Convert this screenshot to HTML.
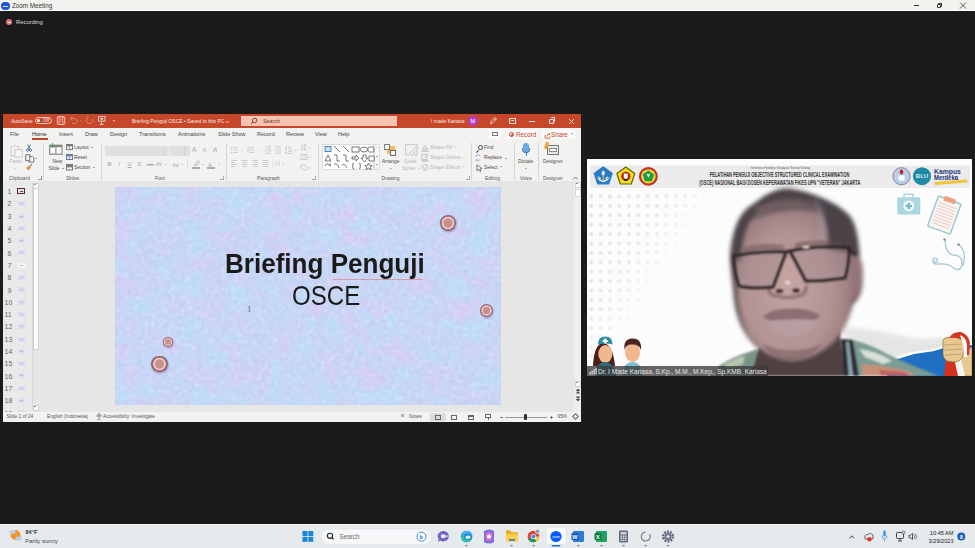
<!DOCTYPE html>
<html><head><meta charset="utf-8">
<style>
*{margin:0;padding:0;box-sizing:border-box}
html,body{width:975px;height:548px;overflow:hidden;background:#1b1b1b;font-family:"Liberation Sans",sans-serif;position:relative}
.a{position:absolute}
.t{position:absolute;white-space:nowrap;line-height:1}
#ztitle{left:0;top:0;width:975px;height:11px;background:#f4f2ee;border-bottom:0.6px solid #fff}
.ppt{position:absolute}
#ptitle{left:3px;top:114px;width:578px;height:14px;background:#c6472a}
#ribbon{left:3px;top:128px;width:578px;height:53px;background:#f3f2f1}
#slidepanel{left:3px;top:181px;width:37px;height:231px;background:#e9e9e9}
#editarea{left:40px;top:181px;width:541px;height:231px;background:#e6e6e6}
#status{left:3px;top:412px;width:578px;height:10px;background:#f3f2f1}
#slide{left:115px;top:187px;width:386px;height:218px;background:#c9d2f2;overflow:hidden}
#video{left:587px;top:159px;width:385px;height:217px;background:#fdfdfd;overflow:hidden}
#taskbar{left:0;top:524px;width:975px;height:24px;background:#e6eaed;border-top:0.6px solid #f2f4f6}
.tab{position:absolute;top:131.5px;font-size:5.5px;color:#444;line-height:1}
.wt{color:#fbe8e2;font-size:5px}
.gl{margin-top:1.2px;position:absolute;font-size:6px;color:#555;line-height:1;white-space:nowrap}
.gr{margin-top:1.4px;position:absolute;font-size:6px;color:#4a4a4a;line-height:1;white-space:nowrap}
.dis{color:#aaa}
.circ{border-radius:50%;background:radial-gradient(circle closest-side,#c28c88 0,#c89490 55%,#f4d4cc 63%,#f0ccc4 74%,#a87080 82%,#8a5c70 100%);box-shadow:0.5px 1px 2px rgba(80,50,90,0.45)}
.dd{display:inline-block;width:0;height:0;border-left:1.4px solid transparent;border-right:1.4px solid transparent;border-top:1.6px solid currentColor;vertical-align:0.3em;margin-left:0.2em}
.du{display:inline-block;width:0;height:0;border-left:1.4px solid transparent;border-right:1.4px solid transparent;border-bottom:1.6px solid currentColor;vertical-align:0.3em;margin-left:0.2em}
.sep{position:absolute;width:1px;background:#d6d5d4}
</style></head><body>
<!-- zoom title bar -->
<div id="ztitle" class="a"></div>
<div class="a" style="left:1px;top:1.5px;width:8.5px;height:8.5px;border-radius:50%;background:#1b55d8"></div>
<div class="a" style="left:3px;top:5.5px;width:4.5px;height:0.8px;background:#dfe8ff"></div>
<div class="t" style="left:12px;top:3px;font-size:6.3px;color:#333">Zoom Meeting</div>
<div class="a" style="left:914px;top:5px;width:5px;height:0.9px;background:#333"></div>
<div class="a" style="left:936.5px;top:3.5px;width:4.5px;height:4.5px;border:0.9px solid #333;border-radius:1px"></div><div class="a" style="left:937.8px;top:2.5px;width:4.2px;height:4.2px;border-top:0.9px solid #333;border-right:0.9px solid #333;border-radius:1px"></div>
<svg class="a" style="left:959px;top:2px" width="8" height="7" viewBox="0 0 8 7"><path d="M1 0.5 L7 6.5 M7 0.5 L1 6.5" stroke="#333" stroke-width="0.8"/></svg>
<!-- recording -->
<div class="a" style="left:6px;top:19px;width:6px;height:6px;border-radius:50%;background:#e07575"></div>
<div class="a" style="left:7.5px;top:21.5px;width:3px;height:1px;background:#fff"></div>
<div class="t" style="left:16px;top:19.5px;font-size:5.9px;color:#ddd">Recording</div>

<!-- PowerPoint -->
<div id="ptitle" class="ppt"></div>
<div class="t wt" style="left:11px;top:118.5px">AutoSave</div>
<div class="a" style="left:35px;top:117px;width:17px;height:7px;border:1px solid #f2c9bd;border-radius:4px"></div>
<div class="a" style="left:37px;top:119px;width:3px;height:3px;border-radius:50%;background:#fff"></div>
<div class="t" style="left:43px;top:119px;font-size:4.5px;color:#fbe8e2">Off</div>






<svg class="a" style="left:55px;top:115px" width="65" height="12" viewBox="55 115 65 12">
<rect x="57.3" y="116.8" width="7.4" height="7.6" rx="0.8" fill="none" stroke="#f4d2c6" stroke-width="0.9"/>
<rect x="59" y="116.8" width="4" height="2.3" fill="none" stroke="#f4d2c6" stroke-width="0.7"/>
<rect x="59" y="121" width="4" height="3.4" fill="none" stroke="#f4d2c6" stroke-width="0.7"/>
<path d="M71 118.5 H74.5 A2.5 2.5 0 0 1 74.5 123.5 H72" fill="none" stroke="#d98a74" stroke-width="0.9"/>
<path d="M72.5 116.8 L70.6 118.5 L72.5 120.2" fill="none" stroke="#d98a74" stroke-width="0.9"/>
<circle cx="80.5" cy="120.5" r="0.5" fill="#d98a74"/>
<path d="M88 117.3 A3.3 3.3 0 1 0 92.6 119" fill="none" stroke="#d98a74" stroke-width="0.9"/>
<path d="M87 116.2 L88.3 117.4 L87 118.8" fill="none" stroke="#d98a74" stroke-width="0.8"/>
<rect x="98.5" y="116.6" width="6.5" height="4.5" fill="none" stroke="#f4d2c6" stroke-width="0.9"/>
<rect x="100.5" y="117.8" width="2.5" height="2" fill="#f4d2c6"/>
<path d="M101.7 121.1 V124.5 M99.8 124.5 H103.6" stroke="#f4d2c6" stroke-width="0.9"/>
<path d="M112.6 120.3 H115.4 L114 121.8z" fill="#f4d2c6"/>
</svg>
<div class="t wt" style="left:132px;top:118.6px">Briefing Penguji OSCE &#x2022; Saved to this PC</div><svg class="a" style="left:225px;top:119.5px" width="5" height="4" viewBox="0 0 5 4"><path d="M0.8 1 L2.5 2.8 L4.2 1" fill="none" stroke="#fbe8e2" stroke-width="0.8"/></svg>
<div class="a" style="left:241px;top:116px;width:156px;height:10px;background:#f8c4b1"></div>
<svg class="a" style="left:250px;top:116.5px" width="8" height="8" viewBox="0 0 8 8"><circle cx="4.6" cy="3.4" r="2.2" fill="none" stroke="#5a2a1a" stroke-width="0.8"/><path d="M3 5 L1 7" stroke="#5a2a1a" stroke-width="0.9"/></svg>
<div class="t" style="left:263px;top:118.8px;font-size:5.4px;color:#6a3a2a">Search</div>
<div class="t wt" style="left:431px;top:118.6px">I made Kariasa</div>
<div class="a" style="left:468px;top:116px;width:10px;height:10px;border-radius:50%;background:#b23fc5"></div>
<div class="t" style="left:470.5px;top:118.5px;font-size:5.5px;color:#fff">M</div>
<svg class="a" style="left:489px;top:116px" width="9" height="9" viewBox="0 0 9 9" fill="none" stroke="#fbe8e2" stroke-width="0.8"><path d="M1.5 7.5 L2 5.5 L6 1.5 L7.5 3 L3.5 7 Z M5 2.5 L6.5 4"/></svg>
<div class="a" style="left:508.5px;top:117.5px;width:7px;height:6px;border:0.8px solid #f6d8ce"></div><div class="a" style="left:510.5px;top:119.5px;width:3px;height:1px;background:#f6d8ce"></div>
<div class="a" style="left:529px;top:120.5px;width:6px;height:1px;background:#fbe8e2"></div>
<div class="a" style="left:549px;top:118.5px;width:5px;height:5px;border:0.9px solid #fbe8e2;border-radius:1px"></div><div class="a" style="left:550.5px;top:117.3px;width:4.5px;height:4.5px;border-top:0.9px solid #fbe8e2;border-right:0.9px solid #fbe8e2;border-radius:1px"></div>
<svg class="a" style="left:567.5px;top:117.5px" width="7" height="7" viewBox="0 0 7 7"><path d="M1 1 L6 6 M6 1 L1 6" stroke="#fbe8e2" stroke-width="0.9"/></svg>

<div id="ribbon" class="ppt"></div>
<div class="tab" style="left:10px">File</div>
<div class="tab" style="left:32px;color:#222">Home</div>
<div class="a" style="left:32px;top:138px;width:16px;height:1.5px;background:#b7472a"></div>
<div class="tab" style="left:59px">Insert</div>
<div class="tab" style="left:85px">Draw</div>
<div class="tab" style="left:110px">Design</div>
<div class="tab" style="left:139px">Transitions</div>
<div class="tab" style="left:178px">Animations</div>
<div class="tab" style="left:218px">Slide Show</div>
<div class="tab" style="left:257px">Record</div>
<div class="tab" style="left:286px">Review</div>
<div class="tab" style="left:315px">View</div>
<div class="tab" style="left:338px">Help</div>
<!-- record/share -->
<div class="a" style="left:489px;top:130px;width:12px;height:9px;background:#fbfbfb"></div>
<div class="a" style="left:492px;top:132px;width:6px;height:4px;border:1px solid #777"></div>
<div class="a" style="left:506px;top:130px;width:31px;height:9px;background:#fbfbfb"></div>
<div class="a" style="left:509px;top:132px;width:5px;height:5px;border-radius:50%;border:1px solid #c43e1c;background:#fff"></div>
<div class="a" style="left:510.5px;top:133.5px;width:2px;height:2px;border-radius:50%;background:#c43e1c"></div>
<div class="t" style="left:516px;top:131.5px;font-size:6.3px;color:#c43e1c">Record</div>
<div class="a" style="left:542px;top:130px;width:33px;height:9px;background:#fbfbfb"></div>
<svg class="a" style="left:544px;top:131.5px" width="7" height="7" viewBox="0 0 7 7" fill="none" stroke="#c43e1c" stroke-width="0.7"><path d="M1 3 V6.2 H5.8 V4.5 M3 4.5 Q3 2 6 2 M4.8 0.8 L6 2 L4.8 3.2"/></svg>
<div class="t" style="left:551px;top:131.5px;font-size:6.3px;color:#c43e1c">Share</div>
<div class="t" style="left:570px;top:131.5px;font-size:5px;color:#555"><i class="dd"></i></div>

<!-- ribbon groups -->
<div class="sep" style="left:43px;top:143px;height:37px"></div>
<div class="sep" style="left:101px;top:143px;height:37px"></div>
<div class="sep" style="left:226px;top:143px;height:37px"></div>
<div class="sep" style="left:318px;top:143px;height:37px"></div>
<div class="sep" style="left:471px;top:143px;height:37px"></div>
<div class="sep" style="left:514px;top:143px;height:37px"></div>
<div class="sep" style="left:538px;top:143px;height:37px"></div>
<div class="gl" style="left:9px;top:175.5px;font-size:4.9px">Clipboard</div>
<div class="gl" style="left:66px;top:175.5px;font-size:4.9px">Slides</div>
<div class="gl" style="left:155px;top:175.5px;font-size:4.9px">Font</div>
<div class="gl" style="left:257px;top:175.5px;font-size:4.9px">Paragraph</div>
<div class="gl" style="left:381.5px;top:175.5px;font-size:4.9px">Drawing</div>
<div class="gl" style="left:485px;top:175.5px;font-size:4.9px">Editing</div>
<div class="gl" style="left:520px;top:175.5px;font-size:4.9px">Voice</div>
<div class="gl" style="left:543px;top:175.5px;font-size:4.9px">Designer</div>
<div class="a" style="left:38px;top:176px;width:3.5px;height:3.5px;border-right:0.8px solid #999;border-bottom:0.8px solid #999"></div>
<div class="a" style="left:220px;top:176px;width:3.5px;height:3.5px;border-right:0.8px solid #aaa;border-bottom:0.8px solid #aaa"></div>
<div class="a" style="left:312px;top:176px;width:3.5px;height:3.5px;border-right:0.8px solid #aaa;border-bottom:0.8px solid #aaa"></div>
<div class="a" style="left:466px;top:176px;width:3.5px;height:3.5px;border-right:0.8px solid #aaa;border-bottom:0.8px solid #aaa"></div>
<svg class="a" style="left:572px;top:176px" width="7" height="4" viewBox="0 0 7 4"><path d="M1 3.5 L3.5 1 L6 3.5" fill="none" stroke="#555" stroke-width="0.8"/></svg>
<!-- clipboard -->
<svg class="a" style="left:9.5px;top:143.5px" width="14" height="14" viewBox="0 0 14 14" fill="#f5f4f3" stroke="#c2c2c2" stroke-width="0.8"><path d="M1 2.5 H3.5 L5 1 L6.5 2.5 H9 V5 M1 2.5 V12 H4.5"/><rect x="4.8" y="5.5" width="7.5" height="7.5"/></svg>
<div class="gr dis" style="left:9.5px;top:159px;font-size:4.9px;color:#b5b5b5">Paste</div>
<div class="gr" style="left:13px;top:166px;font-size:4px;color:#bbb"><i class="dd"></i></div>
<svg class="a" style="left:25px;top:144px" width="8" height="8" viewBox="0 0 8 8" fill="none" stroke="#2a5a90" stroke-width="0.8"><path d="M2.5 0.5 L5 5 M5.5 0.5 L3 5"/><circle cx="2.5" cy="6.2" r="1.1"/><circle cx="5.5" cy="6.2" r="1.1"/></svg>
<svg class="a" style="left:24.5px;top:153.5px" width="10" height="9" viewBox="0 0 10 9" fill="none" stroke="#5a5a5a" stroke-width="0.8"><rect x="0.8" y="0.8" width="4" height="6"/><path d="M4.8 2.5 H7.5 L8.8 3.8 V8.2 H4 V6.8" /></svg>
<div class="gr" style="left:34px;top:156px;font-size:4px;color:#666"><i class="dd"></i></div>
<svg class="a" style="left:25px;top:163px" width="8" height="8" viewBox="0 0 8 8"><path d="M1 5 L4 2.5 L6 4.5 L3.5 7.5z" fill="#e8903a"/><path d="M5 3.5 L7 1" stroke="#444" stroke-width="0.9"/></svg>
<!-- slides -->
<svg class="a" style="left:49px;top:143px" width="14" height="12" viewBox="0 0 14 12"><rect x="0.7" y="2.2" width="12.3" height="9" fill="#fafafa" stroke="#808080" stroke-width="1.1"/><rect x="0.7" y="2.2" width="12.3" height="2" fill="#808080"/><rect x="6.4" y="4" width="1" height="7" fill="#808080"/><path d="M3.5 0 V5 M1 2.5 H6" stroke="#3aa050" stroke-width="0.9"/></svg>
<div class="gr" style="left:52.5px;top:159px;font-size:4.9px">New</div>
<div class="gr" style="left:48.5px;top:166px;font-size:4.9px">Slide <i class="dd"></i></div>
<svg class="a" style="left:66px;top:144px" width="7" height="6" viewBox="0 0 7 6"><rect width="7" height="6" fill="#7a7a7a"/><rect x="1" y="2.3" width="2.2" height="2.7" fill="#f0f0f0"/><rect x="3.8" y="2.3" width="2.2" height="2.7" fill="#f0f0f0"/></svg>
<div class="gr" style="left:74px;top:145px;font-size:4.9px">Layout <i class="dd"></i></div>
<svg class="a" style="left:66px;top:154px" width="7" height="6" viewBox="0 0 7 6"><rect width="7" height="6" fill="#6a7a9a"/><rect x="1" y="2.3" width="2.2" height="2.7" fill="#e8eef8"/><rect x="3.8" y="2.3" width="2.2" height="2.7" fill="#e8eef8"/></svg>
<div class="gr" style="left:74px;top:155px;font-size:4.9px">Reset</div>
<svg class="a" style="left:66px;top:164px" width="7" height="6.5" viewBox="0 0 7 6.5"><rect width="7" height="6.5" fill="#7a7a7a"/><rect x="1" y="3.3" width="5" height="2.2" fill="#f0f0f0"/></svg>
<div class="gr" style="left:74px;top:165px;font-size:4.9px">Section <i class="dd"></i></div>
<!-- font -->
<div class="a" style="left:105px;top:145.5px;width:64px;height:10px;background:#e1e0df"></div>
<div class="a" style="left:163px;top:145.5px;width:1px;height:10px;background:#d0d0d0"></div>
<div class="a" style="left:170px;top:145.5px;width:20px;height:10px;background:#e1e0df"></div>
<div class="a" style="left:184px;top:145.5px;width:1px;height:10px;background:#d0d0d0"></div>
<div class="gr" style="left:192px;top:146px;font-size:6.5px;color:#aaa">A</div>
<div class="gr" style="left:202.5px;top:147px;font-size:5.5px;color:#aaa">A</div>
<div class="gr" style="left:213px;top:146px;font-size:6.5px;color:#aaa;font-style:italic">A</div>
<div class="gr" style="left:107.5px;top:161px;font-size:5.5px;color:#aaa;font-weight:bold">B</div>
<div class="gr" style="left:118.5px;top:161px;font-size:5.5px;color:#aaa;font-style:italic">I</div>
<div class="gr" style="left:127.5px;top:161px;font-size:5.5px;color:#aaa;text-decoration:underline">U</div>
<div class="gr" style="left:137.5px;top:161px;font-size:5.5px;color:#aaa">S</div>
<div class="gr" style="left:147px;top:162px;font-size:4.3px;color:#aaa;text-decoration:line-through">abc</div>
<div class="gr" style="left:156px;top:161px;font-size:5px;color:#aaa">AV <i class="dd"></i></div>
<div class="gr" style="left:172.5px;top:161.5px;font-size:5px;color:#aaa">Aa <i class="dd"></i></div>
<div class="a" style="left:187px;top:159px;width:1px;height:9px;background:#ddd"></div>
<div class="a" style="left:192px;top:167px;width:8px;height:1.5px;background:#aaa"></div>
<svg class="a" style="left:192.5px;top:160px" width="8" height="7" viewBox="0 0 8 7" fill="none" stroke="#aaa" stroke-width="0.8"><path d="M1.5 5.5 L2 4 L5.5 0.8 L6.8 2 L3.2 5.5 Z"/></svg>
<div class="gr" style="left:201px;top:162px;font-size:4px;color:#aaa"><i class="dd"></i></div>
<div class="gr" style="left:208px;top:160.5px;font-size:6px;color:#aaa">A</div>
<div class="a" style="left:207px;top:167px;width:8px;height:1.5px;background:#aaa"></div>
<div class="gr" style="left:217px;top:162px;font-size:4px;color:#aaa"><i class="dd"></i></div>
<!-- paragraph -->
<svg class="a" style="left:226px;top:140px" width="94" height="35" viewBox="226 140 94 35" fill="none" stroke="#c2c2c2" stroke-width="0.8">
<g fill="#c2c2c2" stroke="none"><circle cx="231.5" cy="147.5" r="0.7"/><circle cx="231.5" cy="150" r="0.7"/><circle cx="231.5" cy="152.5" r="0.7"/></g>
<path d="M233 147.5 H237.5 M233 150 H237.5 M233 152.5 H237.5"/>
<path d="M241 149.8 L242 150.8 L243 149.8"/>
<path d="M247.5 147.5 H248.3 V149 M247.3 150 H248.5 L247.3 151.5 H248.5 M247.3 152.8 H248.5 M249.5 147.5 H254 M249.5 150 H254 M249.5 152.5 H254"/>
<path d="M257.5 149.8 L258.5 150.8 L259.5 149.8"/>
<path d="M265 146.8 H271 M267.5 149 H271 M267.5 151 H271 M265 153.2 H271 M266.5 149 L265 150 L266.5 151"/>
<path d="M275 146.8 H281 M277.5 149 H281 M277.5 151 H281 M275 153.2 H281 M275 149 L276.5 150 L275 151"/>
<path d="M288 147 H292 M288 149.2 H292 M288 151.4 H292 M288 153.6 H292 M286 147 V153.6 M285.2 148 L286 147 L286.8 148 M285.2 152.6 L286 153.6 L286.8 152.6"/>
<path d="M294.5 149.8 L295.5 150.8 L296.5 149.8"/>
<path d="M302 144.5 V150 M305 144.5 V150 M301 149 L302 150 L303 149 M304 149 L305 150 L306 149 M303.5 146 L305 144.3 L306 146"/>
<path d="M308.5 147.3 L309.5 148.3 L310.5 147.3"/>
<rect x="301" y="154.5" width="6" height="5"/><path d="M304 155.5 V158.5"/>
<path d="M308.5 157.3 L309.5 158.3 L310.5 157.3"/>
<path d="M301 165 H305 L307 167 V170 H303 L301 168Z"/>
<path d="M308.5 167.3 L309.5 168.3 L310.5 167.3"/>
<path d="M231 160.5 H237 M231 162.5 H235 M231 164.5 H237 M231 166.5 H235"/>
<path d="M241.5 160.5 H247.5 M242.5 162.5 H246.5 M241.5 164.5 H247.5 M242.5 166.5 H246.5"/>
<path d="M252 160.5 H258 M254 162.5 H258 M252 164.5 H258 M254 166.5 H258"/>
<path d="M262.5 160.5 H268.5 M262.5 162.5 H268.5 M262.5 164.5 H268.5 M262.5 166.5 H268.5"/>
<path d="M272.5 159 V168" stroke="#dddddd"/>
<path d="M276 161 V166 M279 161 V166"/>
<path d="M282 163 L283 164 L284 163"/>
</svg>
<!-- drawing -->
<div class="a" style="left:322px;top:144px;width:52px;height:26px;background:#fff;border:1px solid #dcdcdc"></div>
<div class="a" style="left:374px;top:144px;width:6px;height:26px;background:#f7f7f7;border:1px solid #dcdcdc"></div>
<div class="gr" style="left:375.5px;top:146px;font-size:3.5px;color:#bbb"><i class="du"></i></div>
<div class="gr" style="left:375.5px;top:154.5px;font-size:3.5px;color:#555"><i class="dd"></i></div>
<div class="gr" style="left:375.5px;top:163px;font-size:3.5px;color:#555"><i class="dd"></i></div>
<svg class="a" style="left:323px;top:144px" width="52" height="26" viewBox="0 0 52 26" fill="none" stroke="#555" stroke-width="0.8">
<rect x="2" y="2.5" width="6" height="5" fill="#cfe0f5" stroke="#2a6bb0"/>
<line x1="11" y1="2" x2="17" y2="8"/><line x1="20" y1="2" x2="26" y2="8"/>
<rect x="29" y="3" width="7" height="5"/><ellipse cx="41" cy="5.5" rx="3.5" ry="2.5"/><rect x="45" y="3" width="6" height="5" rx="1.5"/>
<path d="M2 17 L5 11 L8 17 Z"/><path d="M11 11 H14 V17 H17"/><path d="M20 11 H23 V17 H26"/><path d="M29 13 H33 V11 L36 14 L33 17 V15 H29Z"/>
<path d="M40 11 H43 V14 H45 L41.5 18 L38 14 H40Z"/><path d="M46 17 V12 H49 A2.5 2.5 0 0 1 50 17Z"/>
<path d="M2 22 Q4 18 6 21 Q8 24 7 19"/><path d="M11 20 Q15 19 16 24"/><path d="M19 21 Q22 19 24 24"/><path d="M31 19 Q29 19 30 21.5 Q28.5 22 30 22.5 Q29 25 31 25"/>
<path d="M36 19 Q38 19 37 21.5 Q38.5 22 37 22.5 Q38 25 36 25"/><path d="M45.5 19 L46.7 21.5 L49.2 21.7 L47.3 23.2 L48 25.5 L45.5 24.2 L43 25.5 L43.7 23.2 L41.8 21.7 L44.3 21.5Z"/>
</svg>
<svg class="a" style="left:384px;top:144px" width="14" height="12" viewBox="0 0 14 12"><rect x="3" y="2" width="8" height="8" fill="#f2c060"/><rect x="7" y="6" width="4" height="4" fill="#f0a830"/><rect x="0.6" y="0.6" width="5" height="5" fill="#fff" stroke="#666" stroke-width="0.9"/><rect x="6.6" y="6.4" width="5" height="5" fill="#fff" stroke="#555" stroke-width="0.9"/></svg>
<div class="gr" style="left:382px;top:159px;font-size:4.9px">Arrange</div>
<div class="gr" style="left:389.5px;top:166px;font-size:4px;color:#666"><i class="dd"></i></div>
<svg class="a" style="left:404.5px;top:144px" width="14" height="12" viewBox="0 0 14 12"><rect x="0.5" y="0.5" width="11.5" height="10.5" fill="#f0eff0" stroke="#c4c4c4" stroke-width="0.8"/><path d="M4 10 L11 3 L13 5 L6 12" fill="#f0eff0" stroke="#c0c0c0" stroke-width="0.8"/></svg>
<div class="gr dis" style="left:404px;top:159px;font-size:4.9px;color:#b5b5b5">Quick</div>
<div class="gr dis" style="left:402px;top:166px;font-size:4.9px;color:#b5b5b5">Styles <i class="dd"></i></div>

<svg class="a" style="left:421px;top:143.5px" width="8" height="28" viewBox="0 0 8 28" fill="none" stroke="#b8b8b8" stroke-width="0.8">
<path d="M1.5 5 L4 1.5 L6.5 5 Z"/><line x1="0.5" y1="7" x2="7.5" y2="7" stroke-width="1.2"/>
<rect x="1" y="10.5" width="5" height="5"/><path d="M3 14 L7 10"/><line x1="0.5" y1="17" x2="7.5" y2="17" stroke-width="1.2"/>
<circle cx="4" cy="23.5" r="3"/><path d="M2.5 23.5 L3.7 24.7 L5.7 22.2"/>
</svg>
<div class="gr dis" style="left:430px;top:145px;font-size:4.9px;color:#b5b5b5">Shape Fill <i class="dd"></i></div>

<div class="gr dis" style="left:430px;top:155px;font-size:4.9px;color:#b5b5b5">Shape Outline <i class="dd"></i></div>

<div class="gr dis" style="left:430px;top:164.5px;font-size:4.9px;color:#b5b5b5">Shape Effects <i class="dd"></i></div>
<!-- editing -->
<div class="a" style="left:478px;top:145px;width:5px;height:5px;border:1px solid #444;border-radius:50%"></div>
<div class="a" style="left:476px;top:150.5px;width:3px;height:1px;background:#444;transform:rotate(-45deg)"></div>
<div class="gr" style="left:484px;top:145px;font-size:4.9px">Find</div>
<svg class="a" style="left:475px;top:153px" width="9" height="9" viewBox="0 0 9 9"><path d="M3 1 L5 3" stroke="#9a7ad0" stroke-width="0.8"/><text x="0.5" y="8" font-size="4" fill="#4a7ec0" font-family="Liberation Sans">ac</text><path d="M1 4 Q1 2 3 2" fill="none" stroke="#4a7ec0" stroke-width="0.6"/></svg>
<div class="gr" style="left:484px;top:155px;font-size:4.9px">Replace</div>
<div class="gr" style="left:504px;top:155.5px;font-size:4px;color:#555"><i class="dd"></i></div>
<svg class="a" style="left:475.5px;top:163.5px" width="7" height="8" viewBox="0 0 7 8"><path d="M1 0.8 L1 6.8 L2.6 5.3 L4 7.5 L5 7 L3.8 4.8 L6 4.6 Z" fill="#fff" stroke="#444" stroke-width="0.7" stroke-linejoin="round"/></svg>
<div class="gr" style="left:484px;top:164.5px;font-size:4.9px">Select <i class="dd"></i></div>
<!-- voice -->
<div class="a" style="left:523px;top:143px;width:6px;height:10px;border-radius:3px;background:#6aa8e8"></div>
<div class="a" style="left:522px;top:148px;width:8px;height:5px;border:1px solid #3a7ec0;border-top:none;border-radius:0 0 4px 4px"></div>
<div class="a" style="left:525.5px;top:153px;width:1px;height:3px;background:#3a7ec0"></div>
<div class="gr" style="left:518px;top:159px;font-size:4.9px">Dictate</div>
<div class="gr" style="left:524px;top:166px;font-size:4px;color:#666"><i class="dd"></i></div>
<!-- designer -->
<div class="a" style="left:547px;top:145px;width:12px;height:10px;border:1.3px solid #777;background:#eaeaea"></div>
<div class="a" style="left:549px;top:148px;width:8px;height:4px;background:#fff;border:1px solid #888"></div>
<div class="a" style="left:545px;top:142px;width:3px;height:7px;background:#f0a830;transform:rotate(20deg)"></div>
<div class="gr" style="left:543px;top:159px;font-size:4.9px">Designer</div>

<div id="slidepanel" class="ppt"></div>
<div id="editarea" class="ppt"></div>
<div id="slide" class="ppt">
<svg width="386" height="218" style="position:absolute;left:0;top:0">
<filter id="tex" x="0" y="0" width="100%" height="100%" color-interpolation-filters="sRGB">
<feTurbulence type="fractalNoise" baseFrequency="0.045" numOctaves="3" seed="7" result="n"/>
<feColorMatrix in="n" type="matrix" values="0 0 0 0 0.86  0 0 0 0 0.79  0 0 0 0 0.96  3 0 0 0 -1.5" result="pink"/>
<feColorMatrix in="n" type="matrix" values="0 0 0 0 0.74  0 0 0 0 0.86  0 0 0 0 0.97  0 3.5 0 0 -1.4" result="cyan"/>
<feTurbulence type="fractalNoise" baseFrequency="0.3" numOctaves="2" seed="9" result="n2"/>
<feColorMatrix in="n2" type="matrix" values="0 0 0 0 0.86  0 0 0 0 0.91  0 0 0 0 0.99  0 3.4 0 0 -1.7" result="lt"/>
<feColorMatrix in="n2" type="matrix" values="0 0 0 0 0.70  0 0 0 0 0.78  0 0 0 0 0.93  0 0 -3.4 0 1.5" result="dk"/>
<feMerge result="m"><feMergeNode in="cyan"/><feMergeNode in="pink"/><feMergeNode in="lt"/><feMergeNode in="dk"/></feMerge><feGaussianBlur in="m" stdDeviation="0.8"/>
</filter>
<rect width="386" height="218" fill="#c9d3f3"/>
<rect width="386" height="218" filter="url(#tex)" opacity="1"/>
</svg>
<div class="t" style="left:110px;top:63.5px;font-size:27px;font-weight:bold;color:#1a1a1a;transform:scaleX(0.965);transform-origin:0 0">Briefing Penguji</div>
<div class="a" style="left:218px;top:92px;width:90px;height:1px;background:#d9868e;opacity:0.7"></div>
<div class="t" style="left:176.5px;top:93.5px;font-size:28.5px;color:#1a1a1a;transform:scaleX(0.845);transform-origin:0 0">OSCE</div>
<div class="a circ" style="left:324.9px;top:28.2px;width:16px;height:16px"></div>
<div class="a circ" style="left:364.6px;top:117px;width:13px;height:13px"></div>
<div class="a circ" style="left:48px;top:150px;width:10px;height:10px"></div>
<div class="a circ" style="left:36.3px;top:168.7px;width:16.5px;height:16.5px"></div>
<div class="t" style="left:133px;top:119px;font-size:8px;color:#666;font-family:'Liberation Serif',serif">I</div>
</div>
<div class="t" style="left:7.5px;top:188.1px;font-size:7px;color:#6a6a6a">1</div>
<div class="a" style="left:16.5px;top:187.9px;width:8.5px;height:6.5px;border:1.4px solid #6b1f33;background:#dfe3f3"></div>
<div class="a" style="left:19.5px;top:190.9px;width:3px;height:1px;background:#556"></div>
<div class="t" style="left:7.5px;top:200.4px;font-size:7px;color:#6a6a6a">2</div>
<div class="a" style="left:18px;top:201.2px;width:7px;height:5px;background:#dadef2"></div>
<div class="a" style="left:19.5px;top:203.2px;width:3px;height:1px;background:#b4b8d8"></div>
<div class="t" style="left:7.5px;top:212.7px;font-size:7px;color:#6a6a6a">3</div>
<div class="a" style="left:18px;top:213.5px;width:7px;height:5px;background:#dadef2"></div>
<div class="a" style="left:19.5px;top:215.5px;width:3px;height:1px;background:#b4b8d8"></div>
<div class="t" style="left:7.5px;top:225.0px;font-size:7px;color:#6a6a6a">4</div>
<div class="a" style="left:18px;top:225.8px;width:7px;height:5px;background:#dadef2"></div>
<div class="a" style="left:19.5px;top:227.8px;width:3px;height:1px;background:#b4b8d8"></div>
<div class="t" style="left:7.5px;top:237.3px;font-size:7px;color:#6a6a6a">5</div>
<div class="a" style="left:18px;top:238.1px;width:7px;height:5px;background:#dadef2"></div>
<div class="a" style="left:19.5px;top:240.1px;width:3px;height:1px;background:#b4b8d8"></div>
<div class="t" style="left:7.5px;top:249.6px;font-size:7px;color:#6a6a6a">6</div>
<div class="a" style="left:18px;top:250.4px;width:7px;height:5px;background:#dadef2"></div>
<div class="a" style="left:19.5px;top:252.4px;width:3px;height:1px;background:#b4b8d8"></div>
<div class="t" style="left:7.5px;top:261.9px;font-size:7px;color:#6a6a6a">7</div>
<div class="a" style="left:17.5px;top:262.7px;width:8px;height:5px;background:#f6f6f8"></div>
<div class="a" style="left:19.5px;top:264.7px;width:3px;height:1px;background:#b4b8d8"></div>
<div class="t" style="left:7.5px;top:274.2px;font-size:7px;color:#6a6a6a">8</div>
<div class="a" style="left:18px;top:275.0px;width:7px;height:5px;background:#dadef2"></div>
<div class="a" style="left:19.5px;top:277.0px;width:3px;height:1px;background:#b4b8d8"></div>
<div class="t" style="left:7.5px;top:286.5px;font-size:7px;color:#6a6a6a">9</div>
<div class="a" style="left:18px;top:287.3px;width:7px;height:5px;background:#dadef2"></div>
<div class="a" style="left:19.5px;top:289.3px;width:3px;height:1px;background:#b4b8d8"></div>
<div class="t" style="left:4.5px;top:298.8px;font-size:7px;color:#6a6a6a">10</div>
<div class="a" style="left:18px;top:299.6px;width:7px;height:5px;background:#dadef2"></div>
<div class="a" style="left:19.5px;top:301.6px;width:3px;height:1px;background:#b4b8d8"></div>
<div class="t" style="left:4.5px;top:311.1px;font-size:7px;color:#6a6a6a">11</div>
<div class="a" style="left:18px;top:311.9px;width:7px;height:5px;background:#dadef2"></div>
<div class="a" style="left:19.5px;top:313.9px;width:3px;height:1px;background:#b4b8d8"></div>
<div class="t" style="left:4.5px;top:323.4px;font-size:7px;color:#6a6a6a">12</div>
<div class="a" style="left:18px;top:324.2px;width:7px;height:5px;background:#dadef2"></div>
<div class="a" style="left:19.5px;top:326.2px;width:3px;height:1px;background:#b4b8d8"></div>
<div class="t" style="left:4.5px;top:335.7px;font-size:7px;color:#6a6a6a">13</div>
<div class="a" style="left:18px;top:336.5px;width:7px;height:5px;background:#dadef2"></div>
<div class="a" style="left:19.5px;top:338.5px;width:3px;height:1px;background:#b4b8d8"></div>
<div class="t" style="left:4.5px;top:348.0px;font-size:7px;color:#6a6a6a">14</div>
<div class="a" style="left:18px;top:348.8px;width:7px;height:5px;background:#dadef2"></div>
<div class="a" style="left:19.5px;top:350.8px;width:3px;height:1px;background:#b4b8d8"></div>
<div class="t" style="left:4.5px;top:360.3px;font-size:7px;color:#6a6a6a">15</div>
<div class="a" style="left:18px;top:361.1px;width:7px;height:5px;background:#dadef2"></div>
<div class="a" style="left:19.5px;top:363.1px;width:3px;height:1px;background:#b4b8d8"></div>
<div class="t" style="left:4.5px;top:372.6px;font-size:7px;color:#6a6a6a">16</div>
<div class="a" style="left:18px;top:373.4px;width:7px;height:5px;background:#dadef2"></div>
<div class="a" style="left:19.5px;top:375.4px;width:3px;height:1px;background:#b4b8d8"></div>
<div class="t" style="left:4.5px;top:384.9px;font-size:7px;color:#6a6a6a">17</div>
<div class="a" style="left:18px;top:385.7px;width:7px;height:5px;background:#dadef2"></div>
<div class="a" style="left:19.5px;top:387.7px;width:3px;height:1px;background:#b4b8d8"></div>
<div class="t" style="left:4.5px;top:397.2px;font-size:7px;color:#6a6a6a">18</div>
<div class="a" style="left:18px;top:398.0px;width:7px;height:5px;background:#dadef2"></div>
<div class="a" style="left:19.5px;top:400.0px;width:3px;height:1px;background:#b4b8d8"></div>
<div class="t" style="left:4.5px;top:409.5px;font-size:7px;color:#6a6a6a">19</div>
<div class="a" style="left:18px;top:410.3px;width:7px;height:5px;background:#dadef2"></div>
<!-- slide panel scrollbar -->
<div class="a" style="left:32px;top:183px;width:7px;height:227px;background:#e6e6e6;border-left:1px solid #d8d8d8"></div>
<div class="a" style="left:32.5px;top:183px;width:6px;height:167px;background:#fdfdfd;border:1px solid #cfcfcf"></div>
<div class="a" style="left:32.5px;top:183px;width:6px;height:6px;background:#fff;border:1px solid #cfcfcf"></div>
<div class="t" style="left:33.5px;top:183.5px;font-size:4px;color:#222"><i class="du"></i></div>
<div class="a" style="left:32.5px;top:405px;width:6px;height:6px;background:#fff;border:1px solid #cfcfcf"></div>
<div class="t" style="left:33.5px;top:405.5px;font-size:4px;color:#222"><i class="dd"></i></div>
<!-- edit area right scrollbar -->
<div class="a" style="left:574px;top:181px;width:7px;height:231px;background:#efefef"></div><div class="a" style="left:574.5px;top:189px;width:6px;height:8px;background:#fff;border:0.6px solid #d8d8d8"></div>
<div class="a" style="left:574.5px;top:182px;width:6px;height:6px;background:#fff;border:1px solid #cfcfcf"></div>
<div class="t" style="left:575.5px;top:182.5px;font-size:4px;color:#222"><i class="du"></i></div>
<div class="a" style="left:574.5px;top:380.5px;width:6px;height:6px;background:#fff;border:1px solid #cfcfcf"></div>
<div class="t" style="left:575.5px;top:381px;font-size:4px;color:#222"><i class="dd"></i></div>
<svg class="a" style="left:574.5px;top:388px" width="6" height="14" viewBox="0 0 6 14" fill="#555"><path d="M3 0.5 L5.5 3 H0.5Z M3 3 L5.5 5.5 H0.5Z"/><path d="M0.5 8.5 H5.5 L3 11Z M0.5 11 H5.5 L3 13.5Z"/></svg>


<div id="status" class="ppt"></div>
<div class="t" style="left:6.5px;top:414.5px;font-size:4.8px;color:#555">Slide 1 of 24</div>
<div class="t" style="left:47px;top:414.5px;font-size:4.8px;color:#555">English (Indonesia)</div>
<svg class="a" style="left:94.5px;top:413px" width="8" height="8" viewBox="0 0 8 8" fill="none" stroke="#666" stroke-width="0.7"><circle cx="4" cy="1.5" r="1"/><path d="M1 3 H7 M4 3 V5.5 L2.5 7.5 M4 5.5 L5.5 7.5"/></svg>
<div class="t" style="left:103px;top:414.5px;font-size:4.8px;color:#555">Accessibility: Investigate</div>
<div class="t" style="left:401px;top:413px;font-size:5.5px;color:#666">&#x2261;</div>
<div class="t" style="left:409px;top:414.5px;font-size:4.8px;color:#555">Notes</div>
<div class="a" style="left:430px;top:412.5px;width:15.5px;height:8.5px;background:#dcdcdc"></div>
<div class="a" style="left:434.5px;top:414.5px;width:6px;height:5px;border:1px solid #666"></div>
<div class="a" style="left:451px;top:414.5px;width:6px;height:5px;border:1px dashed #666"></div>
<div class="a" style="left:467.5px;top:414.5px;width:6.5px;height:5px;border:1px solid #666;border-top-width:2px"></div>
<div class="a" style="left:485px;top:414px;width:6px;height:3.5px;border:1px solid #666"></div>
<div class="a" style="left:487.5px;top:417.5px;width:1px;height:2.5px;background:#666"></div>
<div class="a" style="left:499.5px;top:416.5px;width:3px;height:1px;background:#777"></div>
<div class="a" style="left:505px;top:416.5px;width:42px;height:1px;background:#999"></div>
<div class="a" style="left:524px;top:414px;width:2.5px;height:6px;background:#333;border-radius:1px"></div>
<div class="a" style="left:549.5px;top:416.5px;width:3px;height:1px;background:#777"></div>
<div class="a" style="left:550.5px;top:415.5px;width:1px;height:3px;background:#777"></div>
<div class="t" style="left:557.5px;top:414.5px;font-size:4.8px;color:#555">95%</div>
<div class="a" style="left:572.5px;top:414px;width:5px;height:5px;border:1px solid #666;transform:rotate(45deg)"></div>

<div id="video" class="a">
<svg width="385" height="217" viewBox="0 0 385 217" style="position:absolute;left:0;top:0">
<defs>
<pattern id="dots" x="-0.5" y="32.8" width="9.4" height="9.4" patternUnits="userSpaceOnUse"><circle cx="4.7" cy="4.7" r="2" fill="#e4e4e4"/></pattern>
<linearGradient id="dotfade" x1="0" y1="0" x2="1" y2="0.7"><stop offset="0" stop-color="#fff" stop-opacity="1"/><stop offset="0.35" stop-color="#fff" stop-opacity="0.85"/><stop offset="0.6" stop-color="#fff" stop-opacity="0"/></linearGradient>
<mask id="dmask"><rect x="0" y="32" width="150" height="170" fill="url(#dotfade)"/></mask>
<radialGradient id="skin" cx="0.45" cy="0.58" r="0.68"><stop offset="0" stop-color="#c2a2a2"/><stop offset="0.55" stop-color="#b29292"/><stop offset="0.85" stop-color="#987a7c"/><stop offset="1" stop-color="#786266"/></radialGradient>
<linearGradient id="neck" x1="0" y1="0" x2="0" y2="1"><stop offset="0" stop-color="#80635d"/><stop offset="1" stop-color="#4a3a3a"/></linearGradient>
<linearGradient id="shadow" x1="0" y1="0" x2="0" y2="1"><stop offset="0" stop-color="#fff" stop-opacity="0"/><stop offset="1" stop-color="#c8c8c8" stop-opacity="1"/></linearGradient>
<filter id="soft" x="-10%" y="-10%" width="120%" height="120%"><feGaussianBlur stdDeviation="2"/></filter>
<filter id="soft3" x="-10%" y="-10%" width="120%" height="120%"><feGaussianBlur stdDeviation="1.1"/></filter>
<filter id="soft2" x="-10%" y="-10%" width="120%" height="120%"><feGaussianBlur stdDeviation="0.8"/></filter>
</defs>
<rect width="385" height="217" fill="#fcfcfc"/>
<rect x="0" y="32" width="150" height="170" fill="url(#dots)" mask="url(#dmask)"/>
<!-- header band -->
<rect x="3" y="6.4" width="380" height="22.6" rx="3" fill="#ebebeb"/>
<!-- logos left -->
<polygon points="16.2,8.4 24.7,14.6 21.4,24.6 11,24.6 7.7,14.6" fill="#2b7cc2" stroke="#2b7cc2" stroke-width="2" stroke-linejoin="round"/>
<path d="M9.5 17.5 Q12 21 16.2 21.5 Q20.5 21 23 17.5 Q21 22.5 16.2 23 Q11.5 22.5 9.5 17.5Z" fill="#f4f4f4"/><path d="M11 17 L14 19 L13 21z M21.4 17 L18.4 19 L19.4 21z" fill="#f4f4f4"/><ellipse cx="16.2" cy="14" rx="1.6" ry="2.5" fill="#e8eef5"/><rect x="15.7" y="16" width="1" height="5" fill="#d8c860"/>
<polygon points="38.8,8 47.7,14.5 44.3,25 33.3,25 29.9,14.5" fill="#f2e21c" stroke="#6a6010" stroke-width="1.2" stroke-linejoin="round"/>
<circle cx="38.8" cy="17.3" r="4.6" fill="#b8231a"/><path d="M36.8 14.5 h4 v4 l-2 2 l-2 -2z" fill="#fff"/><ellipse cx="38.8" cy="21" rx="2" ry="1" fill="#222"/>
<circle cx="61.4" cy="17.4" r="9.4" fill="#c4302e"/><circle cx="61.4" cy="17.4" r="7.2" fill="#e8dc30"/>
<polygon points="61.4,11.6 67,15.6 64.9,22.3 57.9,22.3 55.8,15.6" fill="#1f9a45"/><path d="M59.5 15 h3.8 l-1.9 4z" fill="#fff" opacity="0.8"/>
<!-- header text -->
<text x="193.5" y="10.4" font-size="3" fill="#555" text-anchor="middle" font-family="Liberation Sans" transform="translate(193.5 0) scale(0.75 1) translate(-193.5 0)">Kementerian Pendidikan, Kebudayaan, Riset dan Teknologi</text>
<text x="192.5" y="17.9" font-size="6.4" font-weight="bold" fill="#333" text-anchor="middle" font-family="Liberation Sans" transform="translate(192.5 0) scale(0.615 1) translate(-192.5 0)">PELATIHAN PENGUJI OBJECTIVE STRUCTURED CLINICAL EXAMINATION</text>
<text x="192.8" y="26.2" font-size="6.4" font-weight="bold" fill="#333" text-anchor="middle" font-family="Liberation Sans" transform="translate(192.8 0) scale(0.63 1) translate(-192.8 0)">(OSCE) NASIONAL BAGI DOSEN KEPERAWATAN FIKES UPN "VETERAN" JAKARTA</text>
<!-- logos right -->
<circle cx="314.5" cy="17.2" r="8.6" fill="#b9cfe6" stroke="#7a6a8a" stroke-width="0.8"/>
<ellipse cx="314.5" cy="13" rx="1.8" ry="2.4" fill="#c02030"/><rect x="311.5" y="16.5" width="6" height="5" fill="#fff"/>
<circle cx="335" cy="17.2" r="9" fill="#1f8aa6"/>
<text x="335" y="19.3" font-size="6" font-weight="bold" fill="#d8f2f0" text-anchor="middle" font-family="Liberation Sans">BLU</text>
<text x="347" y="15.5" font-size="7.4" font-weight="bold" fill="#1f3d8a" font-family="Liberation Sans" transform="translate(347 0) scale(0.92 1) translate(-347 0)">Kampus</text>
<text x="347" y="20.8" font-size="7.4" font-weight="bold" fill="#1a2f78" font-family="Liberation Sans" transform="translate(347 0) scale(0.8 1) translate(-347 0)">Merdeka</text>
<path d="M347.5 23 L380 20.5 L380.5 23.5 L348 26z" fill="#f2c438"/>
<!-- medical icons -->
<rect x="310.3" y="38.3" width="23" height="17.3" rx="1.5" fill="#acd6e2"/>
<path d="M317 38.3 v-3 h9 v3" fill="none" stroke="#acd6e2" stroke-width="1.6"/>
<circle cx="321.8" cy="47" r="5.4" fill="#f4fafc"/>
<path d="M320.6 43.8 h2.4 v2 h2 v2.4 h-2 v2 h-2.4 v-2 h-2 v-2.4 h2z" fill="#7cb8c8"/>
<g transform="rotate(20 357 57)">
<rect x="345" y="40" width="24" height="32" rx="1" fill="#f8f4f2" stroke="#9cc8d2" stroke-width="1.5"/>
<rect x="351" y="37.5" width="12" height="5" rx="1" fill="#f0a082"/>
<g stroke="#e8b0a8" stroke-width="0.6"><line x1="348" y1="46" x2="366" y2="46"/><line x1="348" y1="49" x2="366" y2="49"/><line x1="348" y1="52" x2="366" y2="52"/><line x1="348" y1="55" x2="366" y2="55"/><line x1="348" y1="58" x2="366" y2="58"/><line x1="348" y1="61" x2="366" y2="61"/><line x1="348" y1="64" x2="366" y2="64"/><line x1="348" y1="67" x2="366" y2="67"/></g>
</g>
<path d="M358 81 Q359 95 366 96 Q376 96 375 106 Q373 114 365 108 Q360 104 352 105 Q345 106 348 101" fill="none" stroke="#a6cbd2" stroke-width="1.3"/>
<circle cx="348" cy="101.5" r="2.4" fill="none" stroke="#a6cbd2" stroke-width="1.2"/>
<path d="M376 107 Q380 92 372 86" fill="none" stroke="#a6cbd2" stroke-width="1.3"/>
<circle cx="357.5" cy="80.5" r="1.2" fill="#888"/><circle cx="371.5" cy="85.5" r="1.2" fill="#888"/>
<!-- bottom right landscape -->
<path d="M258 168 Q300 172 330 180 L385 178 L385 190 L300 200 L258 190z" fill="#d4d4d4" opacity="0.55" filter="url(#soft)"/>
<path d="M300 200.5 L325 193 L346 190.6 L356 187 L385 184 L385 217 L300 217z" fill="#fff"/>
<path d="M306 201.5 L327 195 L346 192.3 L357 189 L385 186 L385 217 L300 217z" fill="#1f6fc2"/>
<!-- fist & flag -->
<path d="M368 196 L385 188 L385 217 L374 217z" fill="#e8c890" stroke="#8a6a3a" stroke-width="0.5"/>
<path d="M359 200 L369 199 L372 217 L357 217z" fill="#d2321f"/>
<path d="M367 199 L374 199 L378 217 L371 217z" fill="#f6f2ee"/>
<path d="M356 184 Q355 179 361 178.5 L372 178 Q377 179 377 185 L376 197 Q374 203 366 203 L360 202 Q355 199 356 192z" fill="#e8c88e" stroke="#7a5a30" stroke-width="0.6"/>
<path d="M357 186 L375 185 M357 191 L375 190 M358 196 L374 195" stroke="#9a7a4a" stroke-width="0.5"/>
<path d="M362 179 Q366 172 374 173 Q381 175 383 184 L382 196 L378 196 L377 184 Q374 178 362 179z" fill="#d03a24"/>
<path d="M373 176 Q379 178 380 186 L380 198 L377 198 L376 186z" fill="#fafafa"/>
<!-- nurse & doctor -->
<path d="M6 207 Q7 185 16 184 Q26 185 28 207z" fill="#4a1f1c"/>
<ellipse cx="18.3" cy="195" rx="7" ry="9" fill="#f0b690"/>
<path d="M11 185.5 Q11 177.5 18.3 177.5 Q25.5 177.5 25.5 185.5 Q18.3 183.5 11 185.5z" fill="#2b8ea3"/>
<path d="M17.3 179.5 h2 v1.5 h1.5 v2 h-1.5 v1.5 h-2 v-1.5 h-1.5 v-2 h1.5z" fill="#fff"/>
<path d="M8 217 Q9 203 18 203 Q27 203 29 217z" fill="#2c6c78"/>
<ellipse cx="45.5" cy="193.5" rx="7.5" ry="9.5" fill="#f0b690"/>
<path d="M37.5 191 Q36 180 45 179.5 Q55 179 54 191 Q52 185 45 185.5 Q39 185 37.5 191z" fill="#4a2420"/>
<path d="M35 217 Q36 203 45.5 203 Q55 203 56 217z" fill="#7fc0d0"/>
<!-- person: shirt -->
<g filter="url(#soft2)">
<path d="M128 217 L132 207 Q145 198 162 193 L170 190 L175 217z" fill="#7a9488"/>
<path d="M136 206 Q148 199 158 197 L156 205 L142 210z" fill="#b8c8b0"/>
<path d="M130 213 L150 207 L156 217 L128 217z" fill="#7aa088"/>
<path d="M172 188 L200 194 L252 168 L258 217 L164 217z" fill="#504042"/>
<path d="M254 180 L266 181 L274 217 L257 217z" fill="#2e2c36"/>
<path d="M259 183 L262 183 L266 217 L262 217z" fill="#8aa8b0"/>
<path d="M266 181 Q285 186 300 195 Q325 207 352 217 L272 217z" fill="#7a9c92"/>
<path d="M272 190 Q290 192 305 202 L296 205 L278 198z" fill="#d8e0d8"/>
<path d="M274 205 Q300 207 320 212 L330 217 L276 217z" fill="#c89078"/>
<path d="M292 211 L318 213 L322 217 L294 217z" fill="#c06060"/>
</g>
<!-- person: head -->
<g filter="url(#soft)">
<path d="M200 29.5 C210 29.5 232 36 247 44.7 C258 51 264 57 266 62 C270 70 272 83 273 99 L275 111 C277 125 275 138 266 145 C262 160 255 178 243 186 C230 198 215 204 204 203 C190 202 180 197 173 191 C160 180 150 165 147 140 L143 101 C143 88 146 72 151 62 C156 52 161 48 166.7 44.7 C176 37 188 29.5 200 29.5Z" fill="#4c4246"/>
<path d="M198 42 C214 42 228 47 235 56 C240 66 241 78 241 90 L262 94 C266 104 266 122 265 140 C262 160 255 178 243 186 C230 197 215 201 204 201 C190 200 180 195 173 189 C162 179 154 165 151 140 L149 108 C149 92 152 74 160 60 C170 48 184 42 198 42Z" fill="url(#skin)"/>
<path d="M160 56 C172 44 190 40 205 40 C222 40 234 46 238 56 C220 50 190 50 165 62z" fill="#6a5a5e" opacity="0.9"/>
<path d="M146 100 C146 80 150 62 162 50 L170 52 C160 64 155 82 154 104z" fill="#4c4246"/>
<path d="M229 40 C236 46 240 62 239 84 L233 84 C234 64 232 50 226 42z" fill="#a8a8c0" opacity="0.3"/>
<path d="M264 96 Q277 95 276 116 Q274 138 264 142z" fill="#94747a"/>
</g>
<g filter="url(#soft3)">
<path d="M156 88 Q175 83 197 86 L197 92 Q175 89 156 94z" fill="#6a5050" opacity="0.5"/>
<path d="M208 84 Q230 79 254 83 L254 89 Q230 85 208 90z" fill="#6a5050" opacity="0.5"/>
<path d="M180 126 Q178 138 190 139 Q200 142 211 139 Q222 138 221 126 Q200 132 180 126z" fill="#8a6a6c" opacity="0.7"/><path d="M193 100 Q189 120 184 127 Q183 135 192 135 Q200 138 209 135 Q218 134 217 127 Q211 118 208 100z" fill="#c4a2a0"/>


<ellipse cx="192.5" cy="132" rx="3.8" ry="2.2" fill="#3a2628"/><ellipse cx="209" cy="131.5" rx="3.8" ry="2.2" fill="#3a2628"/>
<ellipse cx="200.5" cy="123.5" rx="3" ry="1.8" fill="#f0e0e0" opacity="0.85"/>
<path d="M176 157 Q190 148 203 150 Q216 148 233 156 Q231 162 218 163 L190 163 Q178 162 176 157z" fill="#8e6e72"/>
<path d="M180 162 Q205 159 231 161 Q225 176 205 177 Q186 176 180 162z" fill="#b89ea2"/>
<path d="M175 185 Q205 198 235 185 Q222 202 204 202 Q186 202 175 185z" fill="#7a6062" opacity="0.6"/>
</g>
<!-- glasses -->
<g filter="url(#soft2)">
<path d="M147 97 Q172 92 199 93 L186 128 Q165 130 152 127 Q147 112 147 97Z" fill="#a08a90" fill-opacity="0.3" stroke="#2e2628" stroke-width="3"/>
<path d="M203 92 Q232 86 262 89 Q262 106 258 119 Q238 122 219 122 L203 92Z" fill="#a08a90" fill-opacity="0.3" stroke="#2e2628" stroke-width="3"/>
<path d="M198 94 Q201 91 204 93" fill="none" stroke="#2e2628" stroke-width="3"/>
<path d="M261 90 L269 96" fill="none" stroke="#2e2628" stroke-width="2.5"/>
<rect x="216" y="87" width="6" height="2" rx="1" fill="#f4f0f0" opacity="0.95"/>
</g>
<!-- name bar -->
<rect x="0" y="207" width="181" height="10" fill="#3a3a3a" opacity="0.78"/>
<g fill="#ddd"><rect x="2.5" y="213" width="1.2" height="2.5"/><rect x="4.5" y="211.5" width="1.2" height="4"/><rect x="6.5" y="210" width="1.2" height="5.5"/><rect x="8.5" y="209" width="1.2" height="6.5"/></g>
<text x="11" y="215" font-size="6.5" fill="#e6e6e6" font-family="Liberation Sans">Dr. I Made Kariasa. S.Kp., M.M., M.Kep., Sp.KMB. Kariasa</text>
</svg>
</div>
<div id="taskbar" class="a"></div>
<svg class="a" style="left:0;top:524px" width="975" height="24" viewBox="0 524 975 24">
<!-- weather -->
<circle cx="15.5" cy="535" r="5" fill="#f0962a"/>
<ellipse cx="12.5" cy="532" rx="3.2" ry="2" fill="#b8d0ea"/>
<ellipse cx="18.5" cy="538.5" rx="3.2" ry="2" fill="#b8d0ea"/>
<text x="25.5" y="534.3" font-size="5.6" font-weight="bold" fill="#333" font-family="Liberation Sans">84°F</text>
<text x="25" y="542.7" font-size="6" fill="#444" font-family="Liberation Sans">Partly sunny</text>
<!-- windows logo -->
<g fill="#1a86d8"><rect x="302.5" y="531" width="5" height="5"/><rect x="308.3" y="531" width="5" height="5"/><rect x="302.5" y="536.8" width="5" height="5"/><rect x="308.3" y="536.8" width="5" height="5"/></g>
<!-- search -->
<rect x="321" y="529" width="111" height="15.5" rx="7.75" fill="#f6f7f9" stroke="#d8dbe0" stroke-width="0.6"/>
<circle cx="330" cy="535.8" r="2.6" fill="none" stroke="#222" stroke-width="1.1"/>
<line x1="331.9" y1="537.7" x2="333.6" y2="539.4" stroke="#222" stroke-width="1.2"/>
<text x="339.5" y="539.3" font-size="6.3" fill="#666" font-family="Liberation Sans">Search</text>
<circle cx="421.5" cy="536.7" r="4.5" fill="#fff" stroke="#3a8ee0" stroke-width="1"/>
<text x="419.5" y="539" font-size="5.5" font-weight="bold" fill="#1a6ec8" font-family="Liberation Sans">b</text>
<!-- teams chat -->
<path d="M443.8 531 a5.5 5.2 0 1 1 -3.5 9.5 l-2.3 1.5 l0.8 -2.8 a5.5 5.2 0 0 1 5 -8.2z" fill="#6f63c8"/><rect x="441" y="534.5" width="4.5" height="3.5" rx="0.8" fill="#f0f0ff"/><path d="M445.5 536.2 L447.5 535 V537.6z" fill="#f0f0ff"/>
<!-- edge -->
<circle cx="466.6" cy="536.5" r="5.8" fill="#1a8fd8"/>
<path d="M460.9 537.5 Q461.5 542.5 467 542.3 Q471 542 472.2 538.5 Q469 541 465.5 539.5 Q462.5 537.5 464.5 534.5 Q462 535 460.9 537.5z" fill="#36c0a0"/>
<path d="M464 535 Q466 532.5 469.5 533.5 Q472.5 535 472.3 537.5 Q472.8 531 466.5 530.7 Q462 531 460.9 535.5 Q462 534 464 535z" fill="#4ab0f0"/>
<ellipse cx="468" cy="537.2" rx="2.6" ry="1.8" fill="#e4e8ec"/>
<!-- copilot-ish -->
<path d="M484 531 Q489 528 494 531 L494 542 Q489 545 484 542z" fill="#7a6ee0"/>
<path d="M486 533 Q489 531.5 492 533 L492 540 Q489 541.5 486 540z" fill="#e070c0"/>
<circle cx="489" cy="536.5" r="2" fill="#fff"/>
<!-- explorer -->
<rect x="506" y="532" width="12" height="9.5" rx="1" fill="#f2b830"/>
<rect x="506" y="530.5" width="5" height="2.5" rx="0.8" fill="#e0a020"/>
<rect x="506" y="534.5" width="12" height="7" rx="1" fill="#fcd04a"/><rect x="509" y="539" width="6" height="1.6" fill="#2a7ad0"/>
<!-- chrome -->
<circle cx="533.4" cy="536.5" r="5.8" fill="#db4437"/>
<path d="M533.4 536.5 L528.4 539.4 A5.8 5.8 0 0 0 536.3 541.5z" fill="#0f9d58"/>
<path d="M533.4 536.5 L536.3 541.5 A5.8 5.8 0 0 0 539.2 536.5 L533.4 536.5z" fill="#ffcd40"/>
<circle cx="533.4" cy="536.5" r="2.6" fill="#fff"/><circle cx="533.4" cy="536.5" r="2" fill="#4285f4"/>
<circle cx="537.5" cy="531.5" r="2.2" fill="#9a9a9a" stroke="#eee" stroke-width="0.6"/>
<!-- zoom active -->
<rect x="547" y="528" width="18.5" height="16" rx="2" fill="#f7f9fb"/>
<circle cx="556" cy="536.5" r="5.6" fill="#0b5cff"/>
<text x="556" y="537.7" font-size="3" fill="#fff" text-anchor="middle" font-family="Liberation Sans">zoom</text>
<rect x="551.5" y="545" width="9" height="1.5" rx="0.75" fill="#1a6ec8"/>
<!-- word -->
<rect x="573" y="531" width="11" height="11" rx="1" fill="#2b7cd3"/>
<rect x="571.5" y="533" width="7" height="7" rx="0.8" fill="#185abd"/>
<text x="572.3" y="538.9" font-size="5.5" font-weight="bold" fill="#fff" font-family="Liberation Sans">W</text>
<!-- excel -->
<rect x="596" y="531" width="11" height="11" rx="1" fill="#21a366"/>
<rect x="594.5" y="533" width="7" height="7" rx="0.8" fill="#107c41"/>
<text x="596" y="538.9" font-size="5.5" font-weight="bold" fill="#fff" font-family="Liberation Sans">X</text>
<!-- calculator -->
<rect x="619" y="530.5" width="9" height="12" rx="1" fill="#5f6b7a"/>
<rect x="620.5" y="532" width="6" height="2.5" fill="#c8d4e0"/>
<g fill="#d8e0e8"><rect x="620.5" y="535.5" width="1.6" height="1.4"/><rect x="622.7" y="535.5" width="1.6" height="1.4"/><rect x="624.9" y="535.5" width="1.6" height="1.4"/><rect x="620.5" y="537.6" width="1.6" height="1.4"/><rect x="622.7" y="537.6" width="1.6" height="1.4"/><rect x="624.9" y="537.6" width="1.6" height="1.4"/><rect x="620.5" y="539.7" width="1.6" height="1.4"/><rect x="622.7" y="539.7" width="1.6" height="1.4"/><rect x="624.9" y="539.7" width="1.6" height="1.4"/></g>
<!-- loading -->
<path d="M649.5 534 A4.5 4.5 0 1 1 645.5 532" fill="none" stroke="#777" stroke-width="1.1"/>
<!-- settings -->
<circle cx="668" cy="536.5" r="4.8" fill="none" stroke="#5a6270" stroke-width="2.6" stroke-dasharray="1.8 1.2"/>
<circle cx="668" cy="536.5" r="3.4" fill="#6b7585"/><circle cx="668" cy="536.5" r="1.6" fill="#e4e8ec"/>
<!-- running indicators -->
<g fill="#8a8e94"><rect x="510" y="545" width="3" height="1.2" rx="0.6"/><rect x="532" y="545" width="3" height="1.2" rx="0.6"/><rect x="577" y="545" width="3" height="1.2" rx="0.6"/><rect x="600" y="545" width="3" height="1.2" rx="0.6"/><rect x="622" y="545" width="3" height="1.2" rx="0.6"/><rect x="644" y="545" width="3" height="1.2" rx="0.6"/><rect x="666.5" y="545" width="3" height="1.2" rx="0.6"/><rect x="465" y="545" width="3" height="1.2" rx="0.6"/></g>
<!-- tray -->
<path d="M849.5 538.3 L851.8 535.8 L854.1 538.3" fill="none" stroke="#333" stroke-width="0.9"/>
<path d="M865 539 Q864 534.5 868 534.5 Q869.5 532.5 871.5 534 Q873.5 534.5 873 537 L873 539z" fill="none" stroke="#555" stroke-width="0.9"/>
<circle cx="869.5" cy="539.3" r="2.2" fill="#e0312a"/>
<rect x="883.2" y="530.5" width="2.6" height="6" rx="1.3" fill="#4a90e2"/>
<path d="M882 535.5 Q882 539 884.5 539 Q887 539 887 535.5" fill="none" stroke="#4a90e2" stroke-width="0.8"/><line x1="884.5" y1="539" x2="884.5" y2="541.5" stroke="#4a90e2" stroke-width="0.8"/>
<rect x="896.5" y="532.5" width="7" height="6" rx="0.8" fill="none" stroke="#333" stroke-width="0.9"/>
<line x1="900" y1="538.5" x2="900" y2="541" stroke="#333" stroke-width="0.9"/><line x1="898" y1="541" x2="902" y2="541" stroke="#333" stroke-width="0.9"/>
<circle cx="903.5" cy="532.5" r="1.5" fill="#e4e8ec" stroke="#333" stroke-width="0.6"/>
<path d="M909 535.2 h1.5 l2 -1.8 v6.2 l-2 -1.8 h-1.5z" fill="none" stroke="#333" stroke-width="0.8"/>
<path d="M914 534.5 Q915.2 536.5 914 538.5 M915.5 533.5 Q917.5 536.5 915.5 539.5" fill="none" stroke="#333" stroke-width="0.6"/>
<text x="953.5" y="534.8" font-size="5.6" fill="#222" text-anchor="end" font-family="Liberation Sans">10:45 AM</text>
<text x="953.5" y="542.5" font-size="5.6" fill="#222" text-anchor="end" font-family="Liberation Sans">3/29/2023</text>
<circle cx="961.3" cy="536.5" r="4" fill="#1a5fb4"/>
<text x="961.3" y="538.5" font-size="5" font-weight="bold" fill="#fff" text-anchor="middle" font-family="Liberation Sans">8</text>
</svg>
</body></html>
